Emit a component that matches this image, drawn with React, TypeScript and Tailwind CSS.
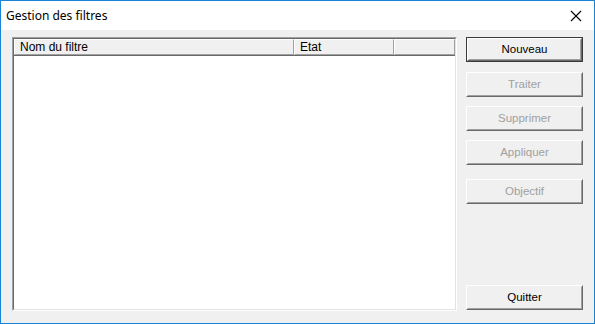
import React from "react";

const font = { fontFamily: '"Liberation Sans", Arial, sans-serif' };

function Button({
  label,
  disabled = false,
  isDefault = false,
}: {
  label: string;
  disabled?: boolean;
  isDefault?: boolean;
}) {
  const inner = (
    <div className="flex h-full w-full border border-t-white border-l-white border-b-[#696969] border-r-[#696969]">
      <div className="flex h-full w-full items-center justify-center border border-t-[#f0f0f0] border-l-[#f0f0f0] border-b-[#a0a0a0] border-r-[#a0a0a0] bg-[#f0f0f0]">
        <span
          className={`text-[11.5px] leading-none ${disabled ? "text-[#a0a0a0]" : "text-black"}`}
        >
          {label}
        </span>
      </div>
    </div>
  );
  if (isDefault) {
    return (
      <div className="h-[25px] w-[117px] border border-[#3a3a3a]">{inner}</div>
    );
  }
  return <div className="h-[25px] w-[117px]">{inner}</div>;
}

function HeaderCell({ label, width }: { label: string; width: string }) {
  return (
    <div
      className={`${width} flex h-full items-center border border-t-white border-l-white border-b-[#a0a0a0] border-r-[#a0a0a0] pl-[5px] text-[12px] text-black`}
    >
      {label}
    </div>
  );
}

export default function App() {
  return (
    <div
      className="flex h-[324px] w-[595px] flex-col border border-[#1883d7] bg-[#f0f0f0]"
      style={font}
    >
      <div className="flex h-[29px] items-center justify-between bg-white pl-[5px] pr-[8px]">
        <span
          className="text-[12px] text-black"
          style={{ fontFamily: '"Noto Sans", "Open Sans", sans-serif' }}
        >
          Gestion des filtres
        </span>
        <svg width="12" height="12" viewBox="0 0 12 12" className="mr-[4px] mt-[1px]">
          <path d="M1 1 L11 11 M11 1 L1 11" stroke="#000" strokeWidth="1.1" />
        </svg>
      </div>

      <div className="flex flex-1 gap-[9px] pl-[11px] pt-[7px]">
        <div className="h-[274px] w-[445px] border border-t-[#a0a0a0] border-l-[#a0a0a0] border-b-white border-r-white">
          <div className="flex h-full w-full flex-col border border-t-[#696969] border-l-[#696969] border-b-[#e3e3e3] border-r-[#e3e3e3] bg-white">
            <div className="flex h-[17px] border-b border-[#696969] bg-[#f0f0f0]">
              <HeaderCell label="Nom du filtre" width="w-[280px]" />
              <HeaderCell label="Etat" width="w-[100px]" />
              <HeaderCell label="" width="w-[61px]" />
            </div>
          </div>
        </div>

        <div className="flex flex-col">
          <Button label="Nouveau" isDefault />
          <div className="mt-[10px]">
            <Button label="Traiter" disabled />
          </div>
          <div className="mt-[9px]">
            <Button label="Supprimer" disabled />
          </div>
          <div className="mt-[9px]">
            <Button label="Appliquer" disabled />
          </div>
          <div className="mt-[14px]">
            <Button label="Objectif" disabled />
          </div>
          <div className="mt-[81px]">
            <Button label="Quitter" />
          </div>
        </div>
      </div>
    </div>
  );
}
